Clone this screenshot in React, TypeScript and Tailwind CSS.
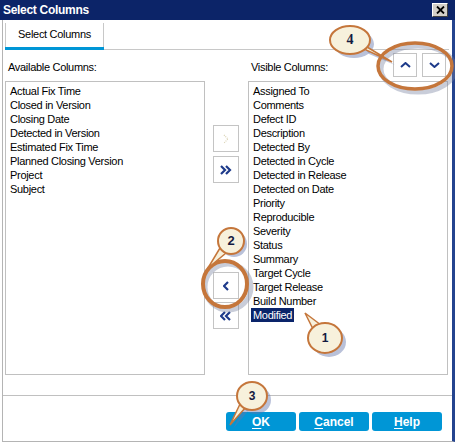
import React from "react";

const available = [
  "Actual Fix Time",
  "Closed in Version",
  "Closing Date",
  "Detected in Version",
  "Estimated Fix Time",
  "Planned Closing Version",
  "Project",
  "Subject",
];

const visible = [
  "Assigned To",
  "Comments",
  "Defect ID",
  "Description",
  "Detected By",
  "Detected in Cycle",
  "Detected in Release",
  "Detected on Date",
  "Priority",
  "Reproducible",
  "Severity",
  "Status",
  "Summary",
  "Target Cycle",
  "Target Release",
  "Build Number",
  "Modified",
];

const NAVY = "#1d3a8a";

const Chevron = ({ dir, double, disabled }: { dir: "l" | "r"; double?: boolean; disabled?: boolean }) => {
  const single = dir === "r" ? "1,1 5,5 1,9" : "5,1 1,5 5,9";
  const second = dir === "r" ? "6,1 10,5 6,9" : "10,1 6,5 10,9";
  return (
    <svg width={double ? 12 : 7} height="10" viewBox={double ? "0 0 12 10" : "0 0 7 10"}>
      <polyline
        points={single}
        fill="none"
        stroke={disabled ? "#d9d2b4" : NAVY}
        strokeWidth={disabled ? 1.2 : 2.2}
        strokeDasharray={disabled ? "1 1" : undefined}
      />
      {double && <polyline points={second} fill="none" stroke={NAVY} strokeWidth={2.2} />}
    </svg>
  );
};

const MoveButton = ({ className, children }: { className: string; children: React.ReactNode }) => (
  <div className={`w-[26px] h-[27px] ml-[8px] border border-[#c4c4c4] bg-white flex items-center justify-center ${className}`}>
    {children}
  </div>
);

const ListBox = ({ items, selected }: { items: string[]; selected?: string }) => (
  <div className="w-[200px] h-full border border-[#c0c0c0] bg-white pt-[2px] pl-[2px] flex flex-col">
    {items.map((item) => (
      <div key={item} className="h-[14px] leading-[14px] text-[11px] tracking-[-0.3px]">
        <span className={`px-[2px] inline-block ${item === selected ? "bg-[#0a246a] text-white" : ""}`}>{item}</span>
      </div>
    ))}
  </div>
);

const DialogButton = ({ hot, rest }: { hot: string; rest: string }) => (
  <div className="w-[70px] h-[19px] rounded-[3px] bg-[#0096d6] text-white font-bold text-[12px] flex items-center justify-center">
    <span>
      <span className="underline underline-offset-[2px]">{hot}</span>
      {rest}
    </span>
  </div>
);

export default function App() {
  return (
    <div className="relative w-[455px] h-[444px] overflow-hidden bg-white text-black font-['Liberation_Sans',Arial,sans-serif] flex flex-col">
      {/* Title bar */}
      <div className="h-[20px] bg-[#0c2468] flex items-center justify-between pl-[3px] pr-[7px]">
        <span className="text-white font-bold text-[12px] tracking-[-0.3px]">Select Columns</span>
        <div className="w-[16px] h-[14px] bg-[#d4d0c8] border-t border-l border-t-white border-l-white border-b border-r border-b-[#404040] border-r-[#404040] flex items-center justify-center">
          <svg width="9" height="8" viewBox="0 0 9 8">
            <path d="M1 0.5 L8 7.5 M8 0.5 L1 7.5" stroke="#000" strokeWidth="1.8" />
          </svg>
        </div>
      </div>

      {/* Body */}
      <div className="flex-1 flex flex-col ml-[2px] mb-[2px] border-l border-l-[#b4b4b4] border-b border-b-[#b4b4b4] border-r-[3px] border-r-[#24448f]">
        {/* Tab */}
        <div className="pt-[3px] pl-[2px] flex">
          <div className="w-[99px] h-[24px] border-x border-[#c8c8c8] text-center text-[11px] tracking-[-0.3px] pt-[3px]">
            Select Columns
          </div>
        </div>
        <div className="flex pl-[2px] pr-[3px]">
          <div className="w-[99px] h-[3px] bg-[#0096d6]" />
          <div className="flex-1 h-[3px] border-b border-[#c8c8c8]" />
        </div>

        {/* Labels row */}
        <div className="pt-[3px] pl-[2px] flex h-[27px]">
          <div className="w-[200px] pl-[3px] pt-[6px] text-[11px] tracking-[-0.3px]">Available Columns:</div>
          <div className="w-[43px]" />
          <div className="w-[200px] flex">
            <div className="pl-[3px] pt-[6px] text-[11px] tracking-[-0.3px]">Visible Columns:</div>
            <div className="flex-1" />
            <div className="flex gap-[5px] mr-[2px]">
              <div className="w-[24px] h-[24px] border border-[#c4c4c4] flex items-center justify-center">
                <svg width="11" height="6" viewBox="0 0 11 6">
                  <polyline points="1,5 5.5,1 10,5" fill="none" stroke={NAVY} strokeWidth="2" />
                </svg>
              </div>
              <div className="w-[24px] h-[24px] border border-[#c4c4c4] flex items-center justify-center">
                <svg width="11" height="6" viewBox="0 0 11 6">
                  <polyline points="1,1 5.5,5 10,1" fill="none" stroke={NAVY} strokeWidth="2" />
                </svg>
              </div>
            </div>
          </div>
        </div>

        {/* Lists */}
        <div className="mt-[4px] pl-[2px] flex h-[294px]">
          <ListBox items={available} />
          <div className="w-[43px] flex flex-col">
            <MoveButton className="mt-[44px]">
              <Chevron dir="r" disabled />
            </MoveButton>
            <MoveButton className="mt-[4px]">
              <Chevron dir="r" double />
            </MoveButton>
            <MoveButton className="mt-[89px]">
              <Chevron dir="l" />
            </MoveButton>
            <MoveButton className="mt-[3px]">
              <Chevron dir="l" double />
            </MoveButton>
          </div>
          <ListBox items={visible} selected="Modified" />
        </div>

        {/* Footer */}
        <div className="mt-[20px] border-t border-[#c0c0c0] pt-[16px] pr-[10px] flex justify-end gap-[3px]">
          <DialogButton hot="O" rest="K" />
          <DialogButton hot="C" rest="ancel" />
          <DialogButton hot="H" rest="elp" />
        </div>
      </div>

      {/* Annotation callouts */}
      <svg className="absolute inset-0 pointer-events-none" width="455" height="444" viewBox="0 0 455 444">
        <g fill="rgba(100,118,170,0.45)" stroke="none">
          <ellipse cx="418" cy="69" rx="37" ry="23" fill="none" stroke="rgba(120,130,160,0.4)" strokeWidth="5" />
          <ellipse cx="228" cy="287" rx="23" ry="23" fill="none" stroke="rgba(120,130,160,0.4)" strokeWidth="5" />
          <ellipse cx="354" cy="44" rx="20" ry="14" />
          <polygon points="365,48 395,65 369,54" />
          <ellipse cx="234" cy="244" rx="13" ry="13" />
          <ellipse cx="329" cy="342" rx="17" ry="15" />
          <ellipse cx="256" cy="400" rx="15" ry="14" />
          <polygon points="244,406 233,429 249,410" />
        </g>
        <g stroke="#c5763b" fill="#f7f1dc">
          <ellipse cx="415" cy="66" rx="37" ry="23" fill="none" strokeWidth="3.5" />
          <ellipse cx="225" cy="284" rx="22" ry="23" fill="none" strokeWidth="4" />
          <polygon points="362,44 392,62 366,50" strokeWidth="1.5" />
          <ellipse cx="350" cy="40" rx="20" ry="14" strokeWidth="2" />
          <polygon points="220,248 226,253 208,268" strokeWidth="1.5" />
          <ellipse cx="231" cy="241" rx="13" ry="13" strokeWidth="2" />
          <polygon points="305,313 313,329 321,325" strokeWidth="1.5" />
          <ellipse cx="325" cy="338" rx="17" ry="15" strokeWidth="2" />
          <polygon points="230,425 241,402 246,407" strokeWidth="1.5" />
          <ellipse cx="252" cy="396" rx="15" ry="14" strokeWidth="2" />
        </g>
      </svg>
      <div className="absolute left-[340px] top-[31px] w-[20px] text-center text-[14px] leading-[18px] font-bold text-[#141a40] font-['Liberation_Serif',serif]">4</div>
      <div className="absolute left-[221px] top-[232px] w-[20px] text-center text-[13px] leading-[18px] font-bold text-[#141a40]">2</div>
      <div className="absolute left-[315px] top-[329px] w-[20px] text-center text-[12px] leading-[18px] font-bold text-[#141a40]">1</div>
      <div className="absolute left-[242px] top-[387px] w-[20px] text-center text-[12px] leading-[18px] font-bold text-[#141a40]">3</div>
    </div>
  );
}
